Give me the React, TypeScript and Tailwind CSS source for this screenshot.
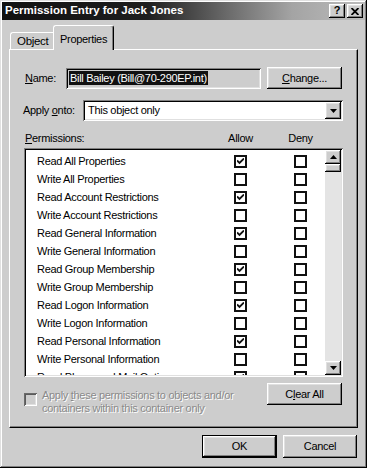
import React from "react";

const RAISED =
  "shadow-[inset_-1px_-1px_#000,inset_1px_1px_#fff,inset_-2px_-2px_#808080,inset_2px_2px_#e0e0e0]";
const SUNKEN =
  "shadow-[inset_1px_1px_#808080,inset_-1px_-1px_#fff,inset_2px_2px_#000,inset_-2px_-2px_#e0e0e0]";

const rows: { label: string; allow: boolean }[] = [
  { label: "Read All Properties", allow: true },
  { label: "Write All Properties", allow: false },
  { label: "Read Account Restrictions", allow: true },
  { label: "Write Account Restrictions", allow: false },
  { label: "Read General Information", allow: true },
  { label: "Write General Information", allow: false },
  { label: "Read Group Membership", allow: true },
  { label: "Write Group Membership", allow: false },
  { label: "Read Logon Information", allow: true },
  { label: "Write Logon Information", allow: false },
  { label: "Read Personal Information", allow: true },
  { label: "Write Personal Information", allow: false },
  { label: "Read Phone and Mail Options", allow: true },
];

function Check({ checked }: { checked: boolean }) {
  return (
    <div className="w-[13px] h-[13px] border-2 border-[#111] bg-white flex items-center justify-center shrink-0">
      {checked && (
        <svg width="7" height="7" viewBox="0 0 7 7">
          <path d="M0 2.5 L2.5 5 L7 0.5" stroke="#111" strokeWidth="1.9" fill="none" />
        </svg>
      )}
    </div>
  );
}

function ArrowBtn({ dir, h }: { dir: "up" | "down"; h: string }) {
  return (
    <div className={`w-[16px] ${h} bg-[#cdcdcd] ${RAISED} flex items-center justify-center shrink-0`}>
      <svg width="7" height="4" viewBox="0 0 7 4">
        {dir === "up" ? (
          <path d="M3.5 0 L7 4 L0 4 Z" fill="#000" />
        ) : (
          <path d="M0 0 L7 0 L3.5 4 Z" fill="#000" />
        )}
      </svg>
    </div>
  );
}

export default function App() {
  return (
    <div
      className={`w-[367px] h-[468px] bg-[#cdcdcd] p-[2px] flex flex-col overflow-hidden text-[11px] tracking-[-0.3px] text-black font-['Liberation_Sans',Arial,sans-serif] shadow-[inset_-1px_-1px_#000,inset_1px_1px_#e0e0e0,inset_-2px_-2px_#808080,inset_2px_2px_#fff]`}
    >
      {/* Title bar */}
      <div className="h-[18px] flex items-center justify-between pl-[3px] pr-[2px] bg-[linear-gradient(90deg,#111_0%,#1e1e1e_40%,#6a6a6a_62%,#a4a4a4_80%,#bcbcbc_100%)]">
        <span className="text-white font-bold text-[11.5px] tracking-normal leading-none">
          Permission Entry for Jack Jones
        </span>
        <div className="flex gap-[2px]">
          <div className={`w-[16px] h-[14px] bg-[#cdcdcd] ${RAISED} flex items-center justify-center`}>
            <span className="font-bold text-[11px] tracking-normal leading-none -mt-[1px]">?</span>
          </div>
          <div className={`w-[16px] h-[14px] bg-[#cdcdcd] ${RAISED} flex items-center justify-center`}>
            <svg width="8" height="7" viewBox="0 0 8 7">
              <path d="M0.5 0 L7.5 7 M7.5 0 L0.5 7" stroke="#000" strokeWidth="1.8" />
            </svg>
          </div>
        </div>
      </div>

      {/* Tabs */}
      <div className="mt-[5px] h-[24px] flex items-end pl-[8px]">
        <div className="w-[43px] h-[17px] border-t border-l border-white rounded-tl-[3px] flex items-center pl-[6px] leading-[14px] text-[11.5px] whitespace-nowrap">
          Object
        </div>
        <div className="relative z-10 -mb-[1px] w-[61px] h-[25px] bg-[#cdcdcd] border-t border-l border-white border-r border-r-black rounded-t-[3px] shadow-[inset_-1px_0_#808080] pl-[6px] pt-[6px] leading-[14px] whitespace-nowrap">
          Properties
        </div>
      </div>

      {/* Panel */}
      <div className="mx-[7px] h-[379px] border-t border-l border-white border-r border-b border-r-black border-b-black shadow-[inset_-1px_-1px_#808080] flex flex-col">
        {/* Name row */}
        <div className="mt-[17px] h-[22px] flex items-center pl-[15px]">
          <div className="w-[41px] whitespace-nowrap">
            <span className="underline underline-offset-[1px]">N</span>ame:
          </div>
          <div className={`w-[195px] h-[21px] ${SUNKEN} flex items-center pl-[3px]`}>
            <span className="bg-[#111] text-white leading-[14px] px-[1px] whitespace-nowrap">Bill Bailey (Bill@70-290EP.int)</span>
          </div>
          <div className={`ml-[6px] w-[75px] h-[22px] ${RAISED} flex items-center justify-center`}>
            <span>
              <span className="underline underline-offset-[1px]">C</span>hange...
            </span>
          </div>
        </div>

        {/* Apply onto row */}
        <div className="mt-[11px] h-[21px] flex items-center pl-[13px]">
          <div className="w-[60px] whitespace-nowrap">
            Apply <span className="underline underline-offset-[1px]">o</span>nto:
          </div>
          <div className={`w-[260px] h-[21px] bg-white ${SUNKEN} flex items-center justify-between pl-[5px] pr-[2px]`}>
            <span>This object only</span>
            <ArrowBtn dir="down" h="h-[17px]" />
          </div>
        </div>

        {/* Header */}
        <div className="mt-[9px] h-[16px] flex items-center pl-[15px]">
          <div className="w-[195px]">
            <span className="underline underline-offset-[1px]">P</span>ermissions:
          </div>
          <div className="w-[41px] text-center">Allow</div>
          <div className="ml-[19px] w-[41px] text-center">Deny</div>
        </div>

        {/* List */}
        <div className={`mt-[2px] ml-[14px] w-[319px] h-[229px] bg-white ${SUNKEN} p-[2px] flex`}>
          <div className="flex-1 overflow-hidden pt-[2px]">
            {rows.map((r) => (
              <div key={r.label} className="h-[18px] flex items-center pl-[11px]">
                <div className="w-[197px] whitespace-nowrap">{r.label}</div>
                <Check checked={r.allow} />
                <div className="ml-[47px]">
                  <Check checked={false} />
                </div>
              </div>
            ))}
          </div>
          <div className="w-[16px] flex flex-col">
            <ArrowBtn dir="up" h="h-[14px]" />
            <div className={`h-[8px] bg-[#cdcdcd] ${RAISED}`} />
            <div className="flex-1 bg-[#e4e4e4]" />
            <ArrowBtn dir="down" h="h-[14px]" />
          </div>
        </div>

        {/* Bottom row */}
        <div className="mt-[6px] flex pl-[14px] pr-[15px]">
          <div className="mt-[10px] w-[13px] h-[13px] shrink-0 shadow-[inset_1px_1px_#6a6a6a,inset_-1px_-1px_#fff,inset_2px_2px_#5a5a5a,inset_-2px_-2px_#e0e0e0]" />
          <div className="ml-[5px] mt-[6px] leading-[12.5px] text-[#8a8a8a] [text-shadow:1px_1px_0_#fff] flex-1 whitespace-nowrap">
            Apply <span className="underline underline-offset-[1px]">t</span>hese permissions to objects and/or
            <br />
            containers within this container only
          </div>
          <div className={`w-[75px] h-[22px] ${RAISED} flex items-center justify-center shrink-0`}>
            <span>
              C<span className="underline underline-offset-[1px]">l</span>ear All
            </span>
          </div>
        </div>
      </div>

      {/* Buttons */}
      <div className="mt-[7px] flex justify-end gap-[6px] pr-[8px]">
        <div className="w-[75px] h-[23px] border border-black">
          <div className={`w-full h-full ${RAISED} flex items-center justify-center`}>OK</div>
        </div>
        <div className={`w-[74px] h-[23px] ${RAISED} flex items-center justify-center`}>Cancel</div>
      </div>
    </div>
  );
}
